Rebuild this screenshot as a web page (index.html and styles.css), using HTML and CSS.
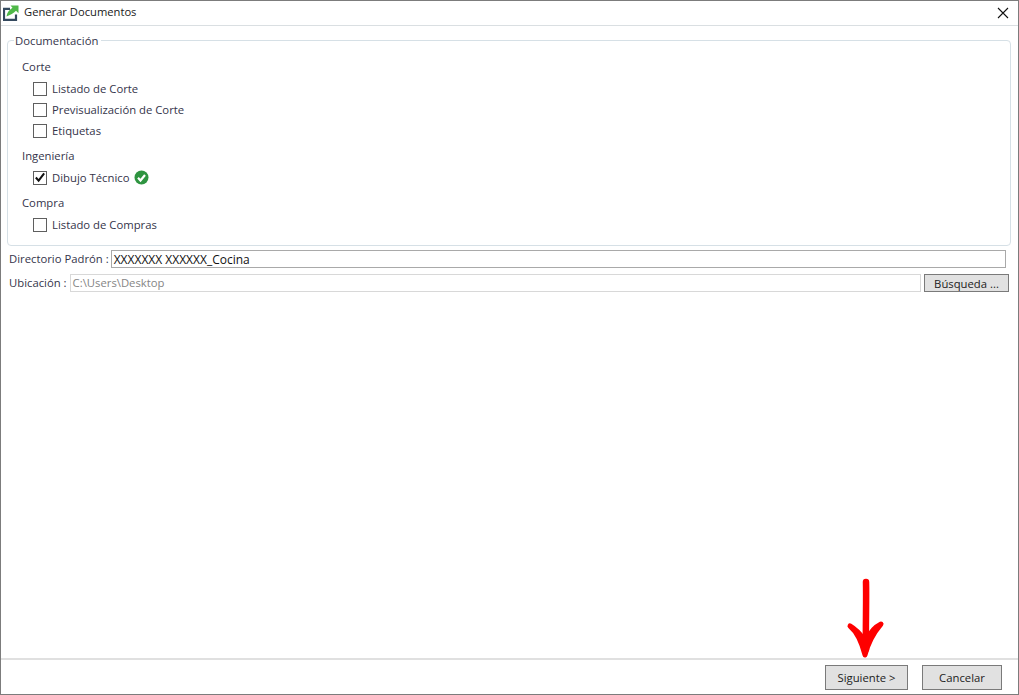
FILE: index.html
```html
<!DOCTYPE html>
<html lang="es">
<head>
<meta charset="utf-8">
<title>Generar Documentos</title>
<link rel="stylesheet" href="styles.css">
</head>
<body>
<div class="window">
  <header class="titlebar">
    <svg class="app-icon" width="16" height="16" viewBox="0 0 16 16">
      <path d="M7 3.800H1V14.800H13V9.500" fill="none" stroke="#34495e" stroke-width="2.200"/>
      <path d="M3.500 11.500C4 8 5.500 5.500 9.500 2.800L7.500 .4H15.500V8.200L13 5.800C10.500 8.200 7.500 10 3.500 11.500z" fill="#4fb848"/>
    </svg>
    <span class="title">Generar Documentos</span>
    <svg class="close" width="12" height="12" viewBox="0 0 12 12">
      <path d="M1 1l10 10M11 1L1 11" stroke="#111" stroke-width="1.100" fill="none"/>
    </svg>
  </header>
  <main class="content">
    <fieldset class="group">
      <legend class="legend">Documentación</legend>
      <div class="section">Corte</div>
      <label class="check"><span class="box"></span>Listado de Corte</label>
      <label class="check"><span class="box"></span>Previsualización de Corte</label>
      <label class="check"><span class="box"></span>Etiquetas</label>
      <div class="section section-next">Ingeniería</div>
      <label class="check"><span class="box">
        <svg width="13" height="13" viewBox="0 0 13 13"><path d="M2 6.500l3 3.500 6-8" fill="none" stroke="#111" stroke-width="2.200"/></svg>
      </span>Dibujo Técnico
        <svg class="ok" width="15" height="15" viewBox="0 0 15 15"><circle cx="7.500" cy="7.500" r="7" fill="#2e9440"/><path d="M4 7.800l2.500 2.700 4.500-5.500" fill="none" stroke="#fff" stroke-width="2.200"/></svg>
      </label>
      <div class="section section-next">Compra</div>
      <label class="check"><span class="box"></span>Listado de Compras</label>
    </fieldset>
    <div class="field field-first">
      <span class="field-label">Directorio Padrón :</span>
      <div class="input input-active">XXXXXXX XXXXXX_Cocina</div>
    </div>
    <div class="field field-second">
      <span class="field-label">Ubicación :</span>
      <div class="input input-disabled">C:\Users\Desktop</div>
      <button class="btn btn-search">Búsqueda ...</button>
    </div>
  </main>
  <footer class="footer">
    <button class="btn btn-next">Siguiente &gt;</button>
    <button class="btn btn-cancel">Cancelar</button>
  </footer>
  <svg class="arrow" width="40" height="82" viewBox="0 0 40 82">
    <path d="M20 5C20.500 25 19.500 50 20 72" fill="none" stroke="#fe0000" stroke-width="6.500" stroke-linecap="round"/>
    <path d="M4 49C10 54 15 62 19 78C23 62 29 54 35 47C29 50 24 56 21.500 62H17.500C14 57 9 52 4 49z" fill="#fe0000" stroke="#fe0000" stroke-width="5" stroke-linejoin="round"/>
  </svg>
</div>
</body>
</html>
```
FILE: styles.css
```css
* { box-sizing: border-box; }
html, body { margin: 0; height: 100%; }
body {
  font-family: "Open Sans", "Noto Sans", sans-serif;
  font-size: 11.3px;
  color: #34344a;
  background: #fff;
}
.window {
  position: relative;
  width: 1019px;
  height: 695px;
  border: 1px solid #7c7c7c;
  display: flex;
  flex-direction: column;
}
.titlebar {
  height: 25px;
  flex: none;
  display: flex;
  align-items: center;
  border-bottom: 1px solid #dadfe2;
  padding: 0 9px 0 2px;
}
.app-icon { flex: none; }
.title { margin: 0 0 3px 5px; font-size: 11.2px; color: #1a1a1a; }
.close { margin-left: auto; }
.content {
  flex: 1;
  padding: 7px 7px 0 6px;
  display: flex;
  flex-direction: column;
}
.group {
  margin: 0;
  padding: 10px 0 0 14px;
  height: 213px;
  border: 1px solid #d6e0e6;
  border-radius: 4px;
  min-width: 0;
}
.legend { padding: 0 3px 0 1px; margin-left: -8px; line-height: 15px; }
.section { height: 17px; line-height: 17px; }
.section-next { margin-top: 6px; }
.check {
  display: flex;
  align-items: center;
  height: 21px;
  margin-left: 11px;
}
.section + .check { margin-top: 3px; }
.box {
  width: 14px;
  height: 14px;
  border: 1px solid #5f5f5f;
  margin-right: 5px;
  flex: none;
  display: flex;
  align-items: center;
  justify-content: center;
}
.ok { margin-left: 5px; }
.field { display: flex; align-items: center; padding-left: 2px; height: 18px; }
.field-first { margin-top: 4px; padding-right: 5px; }
.field-second { margin-top: 6px; padding-right: 2px; }
.field-label { white-space: pre; margin-right: 2px; margin-bottom: 1px; }
.field-second .field-label { margin-right: 3px; }
.input {
  flex: 1;
  height: 18px;
  line-height: 16px;
  padding-left: 2px;
}
.input-active { border: 1px solid #a9a9a9; color: #111; font-size: 12px; line-height: 17px; }
.input-disabled { border: 1px solid #d8d8d8; color: #858585; }
.btn {
  font: inherit;
  color: #222;
  background: #e1e1e1;
  border: 1px solid #7a7a7a;
  padding: 0;
}
.btn-search { width: 85px; height: 18px; margin-left: 3px; }
.footer {
  height: 36px;
  flex: none;
  border-top: 2px solid #e0e0e0;
  display: flex;
  justify-content: flex-end;
  align-items: flex-start;
  gap: 14px;
  padding: 5px 16px 0 0;
}
.btn-next { width: 83px; height: 25px; }
.btn-cancel { width: 80px; height: 25px; }
.arrow { position: absolute; left: 845px; top: 576px; }
```
